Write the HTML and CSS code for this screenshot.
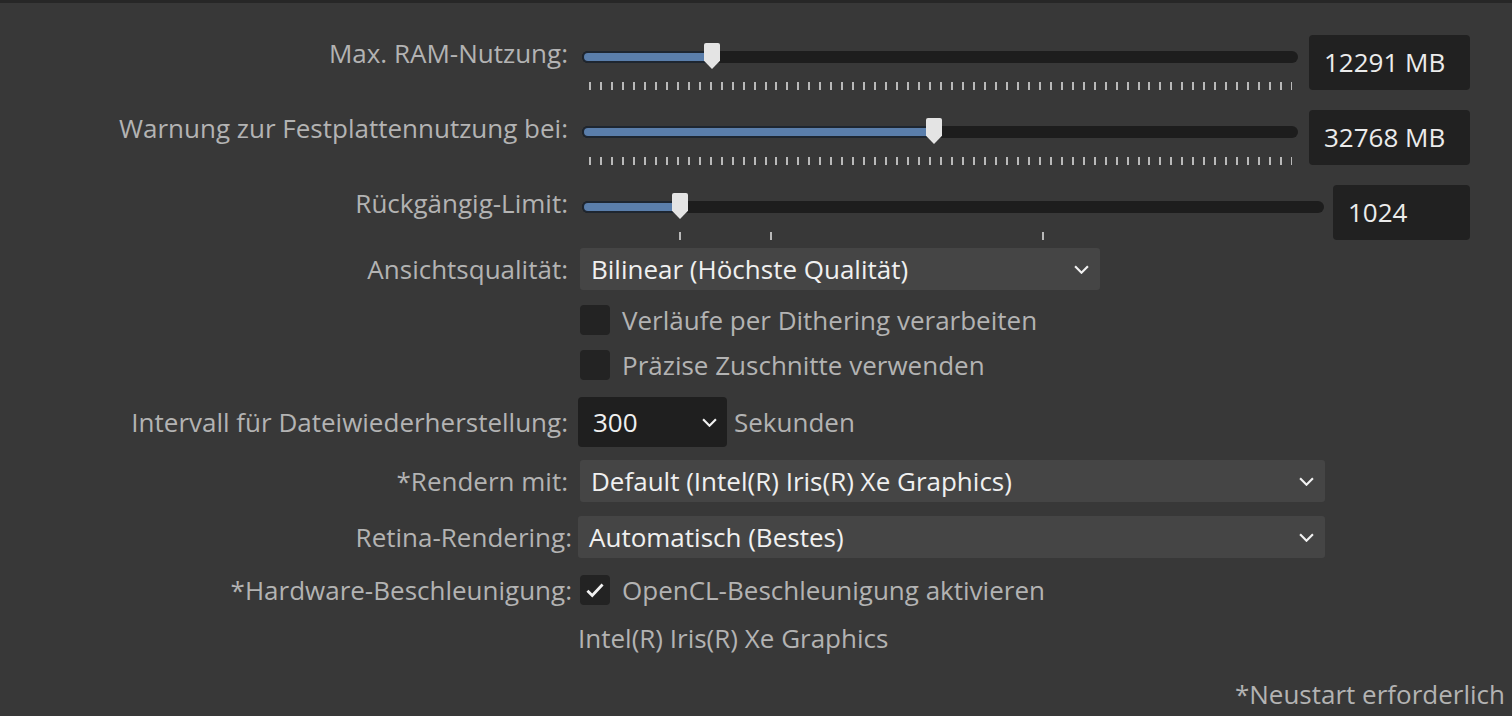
FILE: index.html
```html
<!DOCTYPE html>
<html lang="de">
	<head>
		<meta charset="utf-8">
		<title>Leistung</title>
		<link rel="stylesheet" href="styles.css">
	</head>
	<body>
		<div class="prefs">
			<!-- Memory sliders -->
			<div class="row slider-row first">
				<span class="label">Max. RAM-Nutzung:</span>
				<div class="slider" style="width: 716px">
					<div class="track">
						<div class="fill" style="width: 130px"></div>
						<div class="thumb" style="left: 122px"></div>
					</div>
					<div class="ticks"></div>
				</div>
				<div class="numbox wide">12291 MB</div>
			</div>

			<div class="row slider-row">
				<span class="label">Warnung zur Festplattennutzung bei:</span>
				<div class="slider" style="width: 716px">
					<div class="track">
						<div class="fill" style="width: 352px"></div>
						<div class="thumb" style="left: 344px"></div>
					</div>
					<div class="ticks"></div>
				</div>
				<div class="numbox wide">32768 MB</div>
			</div>

			<div class="row slider-row last">
				<span class="label">Rückgängig-Limit:</span>
				<div class="slider" style="width: 742px">
					<div class="track">
						<div class="fill" style="width: 98px"></div>
						<div class="thumb" style="left: 90px"></div>
					</div>
					<div class="ticks sparse">
						<i style="left: 97px"></i>
						<i style="left: 188px"></i>
						<i style="left: 460px"></i>
					</div>
				</div>
				<div class="numbox narrow">1024</div>
			</div>

			<!-- View quality -->
			<div class="row r-quality">
				<span class="label">Ansichtsqualität:</span>
				<div class="dropdown" style="width: 520px">
					<span>Bilinear (Höchste Qualität)</span>
					<svg class="chev" viewBox="0 0 14 8"><path d="M1 1l6 6 6-6"/></svg>
				</div>
			</div>

			<div class="row r-check1">
				<span class="label"></span>
				<span class="checkbox"></span>
				<span class="check-text">Verläufe per Dithering verarbeiten</span>
			</div>

			<div class="row r-check2">
				<span class="label"></span>
				<span class="checkbox"></span>
				<span class="check-text">Präzise Zuschnitte verwenden</span>
			</div>

			<!-- Recovery interval -->
			<div class="row r-interval">
				<span class="label">Intervall für Dateiwiederherstellung:</span>
				<div class="dropdown dark">
					<span>300</span>
					<svg class="chev" viewBox="0 0 14 8"><path d="M1 1l6 6 6-6"/></svg>
				</div>
				<span class="unit">Sekunden</span>
			</div>

			<!-- Rendering -->
			<div class="row r-render">
				<span class="label">*Rendern mit:</span>
				<div class="dropdown" style="width: 745px">
					<span>Default (Intel(R) Iris(R) Xe Graphics)</span>
					<svg class="chev" viewBox="0 0 14 8"><path d="M1 1l6 6 6-6"/></svg>
				</div>
			</div>

			<div class="row r-retina">
				<span class="label">Retina-Rendering:</span>
				<div class="dropdown" style="width: 747px">
					<span>Automatisch (Bestes)</span>
					<svg class="chev" viewBox="0 0 14 8"><path d="M1 1l6 6 6-6"/></svg>
				</div>
			</div>

			<div class="row r-hw">
				<span class="label">*Hardware-Beschleunigung:</span>
				<span class="checkbox checked">
					<svg viewBox="0 0 16 16"><path d="M2.5 8.5l3.5 3.5L13.5 4"/></svg>
				</span>
				<span class="check-text">OpenCL-Beschleunigung aktivieren</span>
			</div>

			<div class="row r-gpu">
				<span class="label"></span>
				<span class="gpu-name">Intel(R) Iris(R) Xe Graphics</span>
			</div>
		</div>

		<p class="footnote">*Neustart erforderlich</p>
	</body>
</html>
```

FILE: styles.css
```css
/* Base */
* {
	margin: 0;
	padding: 0;
	box-sizing: border-box;
}

body {
	background: #383838;
	border-top: 3px solid #272727;
	height: 716px;
	overflow: hidden;
	font-family: 'Open Sans', 'Noto Sans', sans-serif;
	font-size: 26px;
	color: #b3b3b3;
}

.prefs {
	padding-top: 32px;
}

/* Rows: label column on the left, control on the right */
.row {
	display: flex;
	align-items: center;
}

.label {
	flex: none;
	width: 568px;
	text-align: right;
	white-space: nowrap;
}

/* Slider rows */
.slider-row {
	align-items: flex-start;
	height: 75px;
}

.slider-row.last {
	height: 63px;
}

.slider-row .label {
	line-height: 36px;
}

.slider {
	flex: none;
	margin-left: 14px;
	padding-top: 16px;
}

.track {
	position: relative;
	height: 12px;
	border-radius: 6px;
	background: #1d1d1d;
}

.fill {
	height: 12px;
	border-radius: 6px 0 0 6px;
	background: #5a7eab;
	border: 2px solid #1e2630;
	border-right: none;
}

/* Thumb sits over the track */
.thumb {
	position: absolute;
	top: -8px;
	width: 16px;
	height: 26px;
	background: #e4e4e4;
	border-radius: 2px 2px 0 0;
	clip-path: polygon(0 0, 100% 0, 100% 68%, 50% 100%, 0 68%);
}

.ticks {
	height: 8px;
	margin-top: 19px;
	margin-left: 7px;
	margin-right: 6px;
	background: repeating-linear-gradient(to right, #b9b9b9 0 2px, transparent 2px 10.97px);
}

.ticks.sparse {
	position: relative;
	margin: 19px 0 0 0;
	background: none;
}

.ticks.sparse i {
	position: absolute;
	top: 0;
	width: 2px;
	height: 8px;
	background: #b9b9b9;
}

.numbox {
	flex: none;
	height: 55px;
	line-height: 55px;
	border-radius: 4px;
	background: #212121;
	color: #ececec;
	padding-left: 15px;
}

.numbox.wide {
	width: 161px;
	margin-left: 11px;
}

.numbox.narrow {
	width: 137px;
	margin-left: 9px;
}

/* Dropdowns */
.dropdown {
	flex: none;
	display: flex;
	align-items: center;
	justify-content: space-between;
	height: 42px;
	margin-left: 12px;
	padding: 0 11px;
	border-radius: 3px;
	background: #454545;
	color: #f0f0f0;
}

.dropdown.dark {
	width: 149px;
	height: 50px;
	margin-left: 10px;
	padding: 0 10px 0 15px;
	border-radius: 4px;
	background: #1f1f1f;
}

.chev {
	width: 15px;
	height: 9px;
	fill: none;
	stroke: #f2f2f2;
	stroke-width: 2;
}

.unit {
	margin-left: 7px;
}

/* Checkboxes */
.checkbox {
	flex: none;
	display: flex;
	align-items: center;
	justify-content: center;
	width: 30px;
	height: 30px;
	margin-left: 12px;
	border-radius: 4px;
	background: #232323;
}

.checkbox svg {
	width: 22px;
	height: 22px;
	fill: none;
	stroke: #f2f2f2;
	stroke-width: 2;
}

.check-text {
	margin-left: 12px;
}

.gpu-name {
	margin-left: 10px;
}

/* Vertical spacing between rows */
.r-quality { height: 42px; }
.r-check1 { height: 30px; margin-top: 15px; }
.r-check2 { height: 30px; margin-top: 15px; }
.r-interval { height: 50px; margin-top: 17px; }
.r-render { height: 42px; margin-top: 13px; }
.r-retina { height: 42px; margin-top: 14px; }
.r-retina .label, .r-hw .label { width: 572px; }
.r-retina .dropdown { margin-left: 6px; }
.r-hw { height: 30px; margin-top: 17px; }
.r-hw .checkbox { margin-left: 8px; }
.r-gpu { height: 32px; margin-top: 17px; }

.footnote {
	position: absolute;
	right: 7px;
	bottom: 4px;
}
```
